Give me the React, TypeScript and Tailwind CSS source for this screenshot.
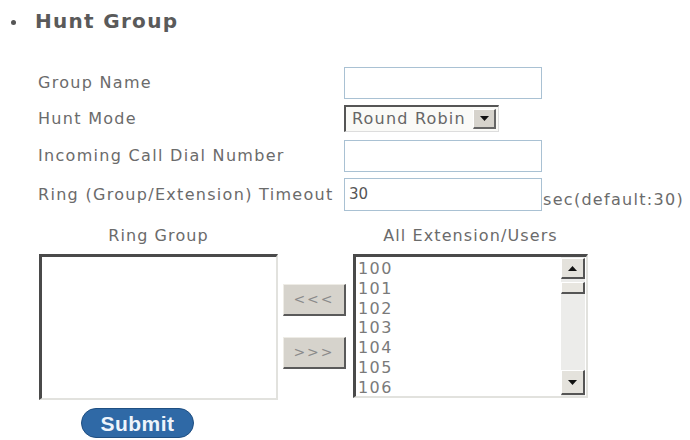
import React from 'react';

const extensions = ['100', '101', '102', '103', '104', '105', '106'];

const TriUp = () => (
  <svg width="9" height="5" viewBox="0 0 9 5"><path d="M0 5 L4.5 0 L9 5 Z" fill="#111" /></svg>
);
const TriDown = () => (
  <svg width="9" height="5" viewBox="0 0 9 5"><path d="M0 0 L4.5 5 L9 0 Z" fill="#111" /></svg>
);

const FieldRow: React.FC<{ label: string; className?: string; children: React.ReactNode }> = ({ label, className, children }) => (
  <div className={`flex items-center ${className ?? ''}`}>
    <span className="w-[306px] shrink-0 text-[16px] tracking-[1.3px] text-[#6b6b6b] leading-none">{label}</span>
    {children}
  </div>
);

const TextBox: React.FC<{ value?: string; h: string }> = ({ value, h }) => (
  <div className={`w-[198px] ${h} border border-[#a9c1d3] bg-white flex items-center px-[4px] text-[15px] text-[#555]`}>
    {value}
  </div>
);

const MoveButton: React.FC<{ label: string; className?: string }> = ({ label, className }) => (
  <button
    className={`w-[63px] h-[32px] bg-[#d6d3cc] border-t border-l border-[#eeece6] border-r-2 border-b-2 border-r-[#5a5a5a] border-b-[#5a5a5a] text-[14px] tracking-[2px] text-[#8a8a8a] flex items-center justify-center ${className ?? ''}`}
  >
    {label}
  </button>
);

export default function App() {
  return (
    <div className="w-[690px] h-[440px] bg-white overflow-hidden font-['DejaVu_Sans',sans-serif]">
      {/* section title */}
      <div className="flex items-center pl-[11px] pt-[8px]">
        <span className="w-[5px] h-[5px] rounded-full bg-[#555] mr-[19px] mt-[2px]" />
        <h1 className="text-[20px] font-bold leading-[26px] tracking-[1.3px] text-[#5a5a5a]">Hunt Group</h1>
      </div>

      {/* settings */}
      <div className="pl-[38px] mt-[33px]">
        <FieldRow label="Group Name" className="h-[32px]">
          <TextBox h="h-[32px]" />
        </FieldRow>
        <FieldRow label="Hunt Mode" className="h-[27px] mt-[6px]">
          <div className="w-[155px] h-[27px] border-t-2 border-l-2 border-[#555] border-r border-b border-r-[#ddd] border-b-[#ddd] bg-[#fafaf7] flex items-center pl-[6px] pr-[2px]">
            <span className="flex-1 text-[16px] tracking-[1.2px] text-[#666] leading-none">Round Robin</span>
            <span className="w-[23px] h-[20px] bg-[#d6d3cc] border-r-2 border-b-2 border-[#666] border-t border-l border-t-white border-l-white flex items-center justify-center">
              <TriDown />
            </span>
          </div>
        </FieldRow>
        <FieldRow label="Incoming Call Dial Number" className="h-[32px] mt-[8px]">
          <TextBox h="h-[32px]" />
        </FieldRow>
        <FieldRow label="Ring (Group/Extension) Timeout" className="h-[33px] mt-[6px]">
          <TextBox h="h-[33px]" value="30" />
          <span className="self-end mb-[1px] ml-[1px] text-[16px] tracking-[1.3px] text-[#6b6b6b] leading-[20px]">sec(default:30)</span>
        </FieldRow>
      </div>

      {/* member lists */}
      <div className="flex pl-[39px] mt-[15px] text-[16px] tracking-[1.1px] text-[#6b6b6b] leading-[20px]">
        <div className="w-[239px] text-center">Ring Group</div>
        <div className="w-[75px]" />
        <div className="w-[235px] text-center">All Extension/Users</div>
      </div>

      <div className="flex pl-[39px] mt-[8px]">
        <div className="w-[239px] h-[146px] border-t-[3px] border-l-[3px] border-[#4a4a4a] border-r-2 border-b-2 border-r-[#e2e2de] border-b-[#e2e2de] bg-white" />

        <div className="flex flex-col ml-[5px] pt-[30px]">
          <MoveButton label="<<<" />
          <MoveButton label=">>>" className="mt-[21px]" />
        </div>

        <div className="ml-[7px] w-[235px] h-[144px] border-t-[3px] border-l-[3px] border-[#4a4a4a] border-r-2 border-b-2 border-r-[#e2e2de] border-b-[#e2e2de] bg-white flex">
          <ul className="flex-1 pl-[2px] pt-[2px] text-[16px] tracking-[1.4px] leading-[19.8px] text-[#7a7a7a]">
            {extensions.map((ext) => (
              <li key={ext}>{ext}</li>
            ))}
          </ul>
          <div className="w-[24px] mr-[1px] bg-[#ececea] flex flex-col pt-[1px] pb-[1px]">
            <span className="h-[21px] bg-[#e4e2dc] border-r-2 border-b-2 border-[#555] border-t border-l border-t-white border-l-white flex items-center justify-center">
              <TriUp />
            </span>
            <span className="h-[12px] mt-[3px] bg-[#e8e6e0] border-r-2 border-b-2 border-[#555] border-t border-l border-t-white border-l-white" />
            <span className="flex-1" />
            <span className="h-[25px] bg-[#e4e2dc] border-r-2 border-b-2 border-[#555] border-t border-l border-t-white border-l-white flex items-center justify-center">
              <TriDown />
            </span>
          </div>
        </div>
      </div>

      <button className="ml-[81px] mt-[8px] w-[113px] h-[30px] rounded-full bg-[#2f69a6] border border-[#1f4f82] flex items-center justify-center text-[21px] font-bold tracking-[0.5px] text-[#eef4fb] font-['Liberation_Sans',sans-serif] leading-none">
        Submit
      </button>
    </div>
  );
}
